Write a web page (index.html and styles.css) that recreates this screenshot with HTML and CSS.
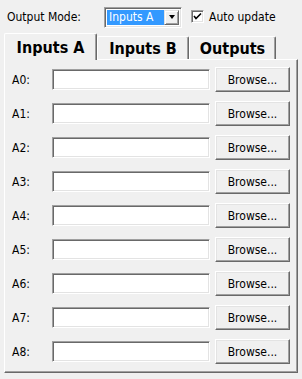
FILE: index.html
```html
<!DOCTYPE html>
<html lang="en">
<head>
  <meta charset="UTF-8">
  <meta name="viewport" content="width=device-width, initial-scale=1.0">
  <title>Input Files</title>
  <link rel="stylesheet" href="styles.css">
</head>
<body>
  <div class="top">
    <span class="mode-label">Output Mode:</span>
    <div class="combo">
      <span class="combo-value">Inputs A</span>
      <span class="combo-btn"><span class="arrow"></span></span>
    </div>
    <label class="check">
      <span class="box">
        <svg width="9" height="9" viewBox="0 0 9 9"><polyline points="1,4 3,6.5 8,1.5" fill="none" stroke="#000" stroke-width="1.6"/></svg>
      </span>
      Auto update
    </label>
  </div>

  <div class="tabs">
    <div class="tab active">Inputs A</div>
    <div class="tab tab-b">Inputs B</div>
    <div class="tab tab-out">Outputs</div>
  </div>

  <div class="panel">
    <div class="row"><span class="lbl">A0:</span><span class="field"></span><span class="btn">Browse...</span></div>
    <div class="row"><span class="lbl">A1:</span><span class="field"></span><span class="btn">Browse...</span></div>
    <div class="row"><span class="lbl">A2:</span><span class="field"></span><span class="btn">Browse...</span></div>
    <div class="row"><span class="lbl">A3:</span><span class="field"></span><span class="btn">Browse...</span></div>
    <div class="row"><span class="lbl">A4:</span><span class="field"></span><span class="btn">Browse...</span></div>
    <div class="row"><span class="lbl">A5:</span><span class="field"></span><span class="btn">Browse...</span></div>
    <div class="row"><span class="lbl">A6:</span><span class="field"></span><span class="btn">Browse...</span></div>
    <div class="row"><span class="lbl">A7:</span><span class="field"></span><span class="btn">Browse...</span></div>
    <div class="row"><span class="lbl">A8:</span><span class="field"></span><span class="btn">Browse...</span></div>
  </div>
</body>
</html>
```

FILE: styles.css
```css
html {
  box-sizing: border-box;
}
*, *:before, *:after {
  box-sizing: inherit;
}
body {
  margin: 0;
  background: #f0f0f0;
  font-family: "DejaVu Sans Condensed", "DejaVu Sans", sans-serif;
  font-size: 12px;
  color: #000;
}

/* top bar */
.top { display: flex; align-items: center; height: 33px; padding-left: 7px; }
.mode-label { width: 97px; }
.combo {
  display: flex; align-items: stretch;
  width: 78px; height: 21px; padding: 1px;
  background: #fff;
  border: 1px solid; border-color: #a0a0a0 #fff #fff #a0a0a0;
  box-shadow: inset 1px 1px #696969, inset -1px -1px #e3e3e3;
  margin-top: 1px;
}
.combo-value {
  margin: 1px 0 1px 1px; width: 58px;
  background: #3399ff; color: #fff;
  padding-left: 2px; line-height: 15px;
}
.combo-btn {
  margin: 1px 1px 1px auto; width: 15px;
  display: flex; align-items: center; justify-content: center;
  background: #f0f0f0;
  border: 1px solid; border-color: #e3e3e3 #696969 #696969 #e3e3e3;
  box-shadow: inset 1px 1px #fff, inset -1px -1px #a0a0a0;
}
.arrow { width: 0; height: 0; border-left: 3.5px solid transparent; border-right: 3.5px solid transparent; border-top: 4px solid #000; }
.check { display: flex; align-items: center; margin-left: 9px; }
.box {
  width: 13px; height: 13px; margin-right: 5px;
  display: flex; align-items: center; justify-content: center;
  background: #fff;
  border: 1px solid; border-color: #a0a0a0 #fff #fff #a0a0a0;
  box-shadow: inset 1px 1px #696969, inset -1px -1px #e3e3e3;
}

/* tabs */
.tabs { display: flex; align-items: flex-end; height: 26px; margin-left: 4px; position: relative; z-index: 1; }
.tab {
  height: 23px; width: 92px;
  font-size: 16px; font-weight: bold;
  display: flex; align-items: center; justify-content: center;
  border-left: 1px solid #fff; border-top: 1px solid #fff;
  border-right: 1px solid #696969;
  box-shadow: inset -1px 0 #a0a0a0;
  border-radius: 2px 2px 0 0;
  background: #f0f0f0;
}
.tab.active { height: 27px; margin-bottom: -1px; width: 93px; padding-top: 1px; }
.tab-out { width: 87px; }

/* panel */
.panel {
  margin: 0 4px 0 4px;
  width: 294px;
  padding: 7px 6px 8px 7px;
  border: 1px solid; border-color: #fff #696969 #696969 #fff;
  box-shadow: inset -1px -1px #a0a0a0;
  display: grid; row-gap: 9px;
}
.row { display: grid; grid-template-columns: 40px 158px 75px; align-items: center; height: 25px; }
.field {
  height: 21px; background: #fff;
  border: 1px solid; border-color: #a0a0a0 #fff #fff #a0a0a0;
  box-shadow: inset 1px 1px #696969, inset -1px -1px #e3e3e3;
}
.btn {
  height: 25px; margin-left: 5px; width: 75px;
  display: flex; align-items: center; justify-content: center;
  border: 1px solid; border-color: #fff #696969 #696969 #fff;
  box-shadow: inset -1px -1px #a0a0a0, inset 1px 1px #e3e3e3;
}
```
